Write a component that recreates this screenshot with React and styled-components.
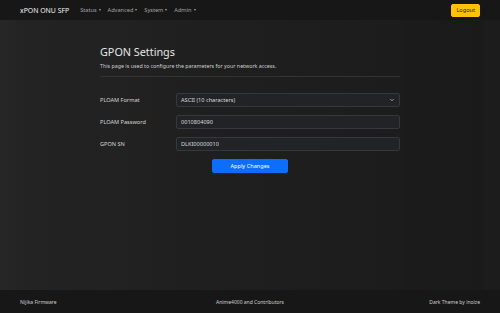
import React from 'react';
import styled, { createGlobalStyle } from 'styled-components';

const GlobalStyle = createGlobalStyle`
    html, body {
        margin: 0;
        padding: 0;
        height: 100%;
    }
    body {
        background: #1d1d1d;
        font-family: "Noto Sans", "Open Sans", sans-serif;
        color: #dedede;
    }
    #root {
        height: 100%;
    }
`

const Page = styled.div`
    display: flex;
    flex-direction: column;
    height: 313px;
    background: linear-gradient(90deg, #262626 0%, #202020 40%, #1c1c1c 100%);
`

const Navbar = styled.nav`
    height: 20px;
    background: #171717;
    display: flex;
    align-items: center;
    padding: 0 20px;
    flex-shrink: 0;
`

const Brand = styled.span`
    font-size: 6.9px;
    color: #f2f2f2;
    margin-right: 11px;
`

const NavLinks = styled.div`
    display: flex;
    gap: 7px;
    flex: 1;
`

const NavLink = styled.span`
    font-size: 5.6px;
    color: #a3a3a3;
    display: flex;
    align-items: center;

    &::after {
        content: '';
        margin-left: 2px;
        border-top: 2px solid #a3a3a3;
        border-left: 1.5px solid transparent;
        border-right: 1.5px solid transparent;
    }
`

const LogoutButton = styled.button`
    font-family: inherit;
    font-size: 5.6px;
    color: #222;
    background: #ffc107;
    border: 1px solid #ffc107;
    border-radius: 2px;
    height: 13px;
    padding: 0 4px;
`

const Main = styled.main`
    flex: 1;
    margin: 0 16px;
    background: rgba(0, 0, 0, 0.04);
    display: flex;
    justify-content: center;
`

const Card = styled.section`
    width: 300px;
    padding: 23px 3px 0;
    background: rgba(255, 255, 255, 0.006);
`

const Title = styled.h1`
    font-size: 10.8px;
    font-weight: 400;
    color: #e6e6e6;
    margin: 0;
    line-height: 17px;
`

const Lead = styled.p`
    font-size: 5.3px;
    color: #cfcfcf;
    margin: 2px 0 0;
    line-height: 8px;
`

const Divider = styled.hr`
    border: 0;
    border-top: 1px solid #333;
    margin: 6px 0 16px;
`

const Form = styled.form`
    display: flex;
    flex-direction: column;
    gap: 8px;
`

const Row = styled.div`
    display: grid;
    grid-template-columns: 76px 1fr;
    align-items: center;
`

const Label = styled.label`
    font-size: 5.6px;
    color: #d6d6d6;
`

const Field = styled.div`
    height: 14px;
    box-sizing: border-box;
    background: #212327;
    border: 1px solid #35383c;
    border-radius: 2px;
    display: flex;
    align-items: center;
    justify-content: space-between;
    padding: 0 5px 0 4px;
    font-size: 5.6px;
    color: #dcdcdc;
`

const Chevron = styled.svg`
    width: 4px;
    height: 4px;
`

const Actions = styled.div`
    display: flex;
    justify-content: center;
`

const ApplyButton = styled.button`
    font-family: inherit;
    font-size: 5.6px;
    color: #fff;
    background: #0d6efd;
    border: 1px solid #0d6efd;
    border-radius: 2px;
    width: 76px;
    height: 14px;
    padding: 0;
`

const Footer = styled.footer`
    height: 23px;
    background: #171717;
    display: grid;
    grid-template-columns: 1fr auto 1fr;
    align-items: center;
    padding: 0 20px;
    font-size: 5px;
    color: #cfcfcf;
    flex-shrink: 0;
`

const FooterRight = styled.span`
    text-align: right;
`

export default function App() {
    return (
        <>
            <GlobalStyle />
            <Page>
                <Navbar>
                    <Brand>xPON ONU SFP</Brand>
                    <NavLinks>
                        <NavLink>Status</NavLink>
                        <NavLink>Advanced</NavLink>
                        <NavLink>System</NavLink>
                        <NavLink>Admin</NavLink>
                    </NavLinks>
                    <LogoutButton>Logout</LogoutButton>
                </Navbar>
                <Main>
                    <Card>
                        <Title>GPON Settings</Title>
                        <Lead>This page is used to configure the parameters for your network access.</Lead>
                        <Divider />
                        <Form>
                            <Row>
                                <Label>PLOAM Format</Label>
                                <Field>
                                    ASCII (10 characters)
                                    <Chevron viewBox="0 0 16 16">
                                        <path d="M2 5l6 6 6-6" fill="none" stroke="#bdbdbd" strokeWidth="3" strokeLinecap="round" strokeLinejoin="round" />
                                    </Chevron>
                                </Field>
                            </Row>
                            <Row>
                                <Label>PLOAM Password</Label>
                                <Field>0010804090</Field>
                            </Row>
                            <Row>
                                <Label>GPON SN</Label>
                                <Field>DLKI00000010</Field>
                            </Row>
                            <Actions>
                                <ApplyButton type="button">Apply Changes</ApplyButton>
                            </Actions>
                        </Form>
                    </Card>
                </Main>
                <Footer>
                    <span>Nijika Firmware</span>
                    <span>Anime4000 and Contributors</span>
                    <FooterRight>Dark Theme by inoize</FooterRight>
                </Footer>
            </Page>
        </>
    );
}
